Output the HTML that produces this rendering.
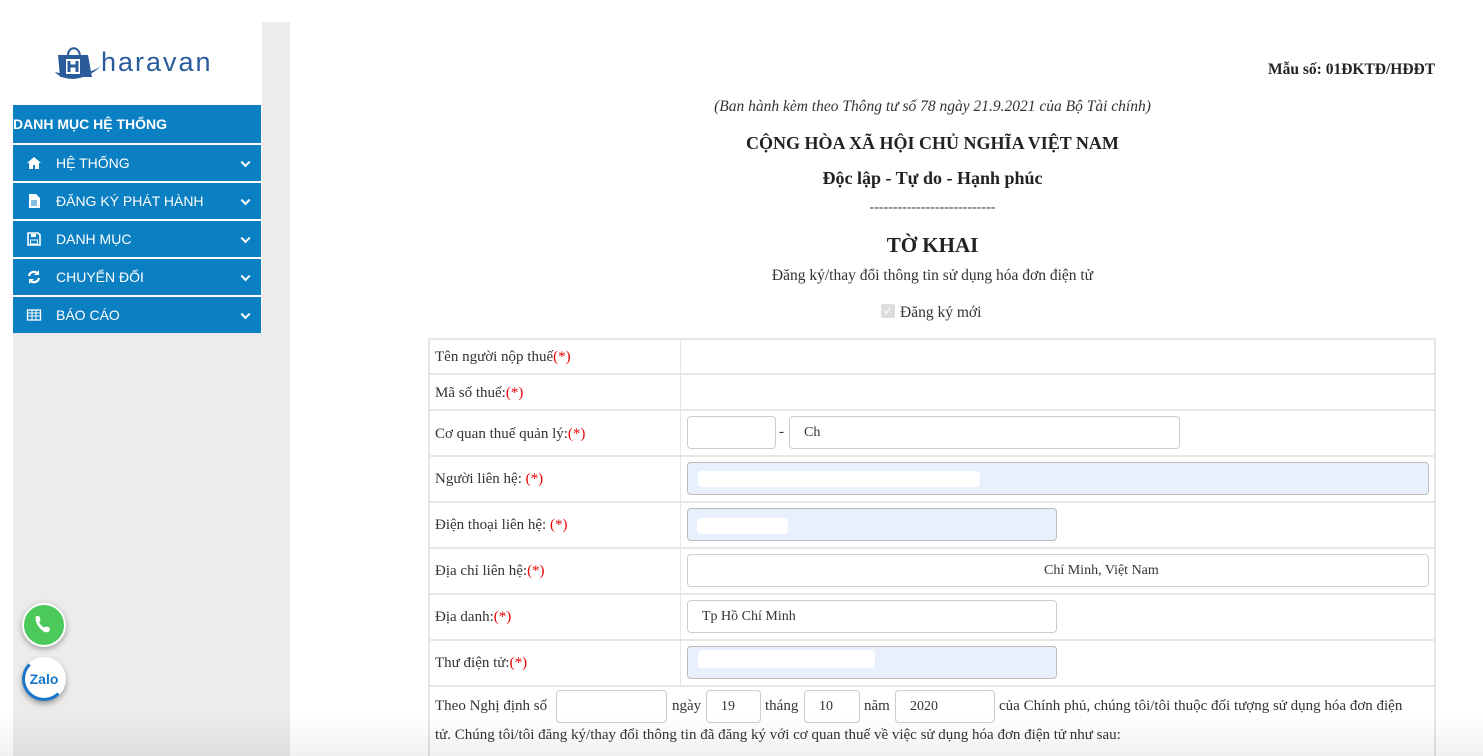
<!DOCTYPE html>
<html><head><meta charset="utf-8"><style>
*{margin:0;padding:0;box-sizing:border-box}
body{width:1483px;height:756px;overflow:hidden;background:#fff;position:relative;font-family:"Liberation Serif",serif;color:#333}
.abs{position:absolute}
.menu{position:absolute;left:13px;width:248px;background:#0a7fc2;color:#fff;font-family:"Liberation Sans",sans-serif;font-size:14px}
.menu .t{position:absolute;left:43px;top:50%;transform:translateY(-50%)}
.menu .ic{position:absolute;left:13px;top:50%;transform:translateY(-50%);width:16px;height:16px}
.menu .ch{position:absolute;right:12px;top:50%;transform:translateY(-60%) rotate(45deg);width:7px;height:7px;border-right:2px solid #fff;border-bottom:2px solid #fff}
.hl{position:absolute;left:428px;width:1008px;height:2px;background:#e6e6e6}
.lbl{position:absolute;left:435px;font-size:15px;color:#333}
.r{color:#e00}
.in{position:absolute;border:1px solid #ccc;border-radius:4px;background:#fff;font-size:14px;padding-left:14px;line-height:31px;height:33px}
.bl{background:#e8f0fe;border-color:#bbb}
.mask{position:absolute;background:#fff;border-radius:4px}
</style></head><body>
<div class="abs" style="left:262px;top:22px;width:28px;height:734px;background:#ececec"></div>
<div class="abs" style="left:13px;top:333px;width:277px;height:423px;background:#ececec"></div>
<svg class="abs" style="left:54px;top:42px" width="50" height="42" viewBox="0 0 50 42">
<path d="M4 13h30l4 22H6z" fill="#2a5c9c"/>
<path d="M14 13c0-8 10-10 12 0" fill="none" stroke="#2a5c9c" stroke-width="2"/>
<rect x="12" y="17" width="14" height="15" fill="#fff"/>
<path d="M15 19v11M23 19v11M15 24h8" stroke="#2a5c9c" stroke-width="3"/>
<path d="M1 30c8 10 30 10 46-6c-14 10-32 10-46 6z" fill="#2a5c9c"/>
</svg>
<div class="abs" style="left:101px;top:45px;font-family:'Liberation Sans',sans-serif;font-size:27px;color:#2a5c9c;letter-spacing:2px;line-height:34px">haravan</div>
<div class="menu" style="top:105px;height:38px"><span style="position:absolute;left:0;top:50%;transform:translateY(-50%);font-weight:bold">DANH MỤC HỆ THỐNG</span></div>
<div class="menu" style="top:145px;height:36px"><svg class="ic" viewBox="0 0 16 16"><path d="M8 2L1 8h2v6h4v-4h2v4h4V8h2z" fill="#fff"/></svg><span class="t">HỆ THỐNG</span><i class="ch"></i></div>
<div class="menu" style="top:183px;height:36px"><svg class="ic" viewBox="0 0 16 16"><path d="M3 1h7l4 4v10H3z" fill="#fff"/><path d="M5 8h6M5 10h6M5 12h6" stroke="#0a7fc2"/></svg><span class="t">ĐĂNG KÝ PHÁT HÀNH</span><i class="ch"></i></div>
<div class="menu" style="top:221px;height:36px"><svg class="ic" viewBox="0 0 16 16"><path d="M2 2h10l2 2v10H2z" fill="none" stroke="#fff" stroke-width="1.6"/><rect x="5" y="3" width="5" height="3" fill="#fff"/><rect x="4.5" y="9" width="7" height="4" fill="none" stroke="#fff"/></svg><span class="t">DANH MỤC</span><i class="ch"></i></div>
<div class="menu" style="top:259px;height:36px"><svg class="ic" viewBox="0 0 16 16"><path d="M3 7a5 5 0 0 1 9-2M13 9a5 5 0 0 1-9 2" fill="none" stroke="#fff" stroke-width="2.2"/><path d="M13 1v5H8zM3 15v-5h5z" fill="#fff"/></svg><span class="t">CHUYỂN ĐỔI</span><i class="ch"></i></div>
<div class="menu" style="top:297px;height:36px"><svg class="ic" viewBox="0 0 16 16"><rect x="1.5" y="3" width="13" height="10" fill="none" stroke="#fff" stroke-width="1.3"/><path d="M1.5 6h13M1.5 9h13M6 3v10M10 3v10" stroke="#fff"/></svg><span class="t">BÁO CÁO</span><i class="ch"></i></div>
<div class="abs" style="left:22px;top:603px;width:44px;height:44px;border-radius:50%;background:#4cc95b;border:2px solid #fff;box-shadow:0 2px 6px rgba(0,0,0,.35)"></div>
<svg class="abs" style="left:30px;top:611px" width="28" height="28" viewBox="0 0 28 28"><path d="M8 5c2 0 3 4 2 5s-1 2 1 4 3 3 4 2 5 0 5 2-2 4-5 3S7 15 6 10s0-5 2-5z" fill="#fff"/></svg>
<div class="abs" style="left:22px;top:657px;width:44px;height:44px;border-radius:50%;background:#fff;border:3px solid #1976c8;border-top-color:#fff;border-right-color:#fff;box-shadow:0 3px 6px rgba(0,0,0,.35);font-family:'Liberation Sans',sans-serif;font-weight:bold;font-size:14px;color:#1976c8;text-align:center;line-height:38px">Zalo</div>
<div class="abs" style="left:1268px;top:61px;font-size:15.5px;font-weight:bold;color:#222">Mẫu số: 01ĐKTĐ/HĐĐT</div>
<div class="abs" style="left:430px;width:1005px;top:98px;text-align:center;font-size:15.5px;font-style:italic">(Ban hành kèm theo Thông tư số 78 ngày 21.9.2021 của Bộ Tài chính)</div>
<div class="abs" style="left:430px;width:1005px;top:133px;text-align:center;font-size:18px;font-weight:bold;color:#222">CỘNG HÒA XÃ HỘI CHỦ NGHĨA VIỆT NAM</div>
<div class="abs" style="left:430px;width:1005px;top:168px;text-align:center;font-size:18px;font-weight:bold;color:#222">Độc lập - Tự do - Hạnh phúc</div>
<div class="abs" style="left:430px;width:1005px;top:200px;text-align:center;font-size:14px">---------------------------</div>
<div class="abs" style="left:430px;width:1005px;top:233px;text-align:center;font-size:21px;font-weight:bold;color:#222">TỜ KHAI</div>
<div class="abs" style="left:430px;width:1005px;top:267px;text-align:center;font-size:15.5px">Đăng ký/thay đổi thông tin sử dụng hóa đơn điện tử</div>
<div class="abs" style="left:881px;top:304px;width:14px;height:14px;background:#ddd;border-radius:2px;color:#fff;font-size:12px;line-height:14px;text-align:center">✓</div>
<div class="abs" style="left:900px;top:304px;font-size:15.5px">Đăng ký mới</div>
<div class="abs" style="left:428px;top:338px;width:2px;height:418px;background:#e6e6e6"></div>
<div class="abs" style="left:1434px;top:338px;width:2px;height:418px;background:#e6e6e6"></div>
<div class="abs" style="left:680px;top:338px;width:1px;height:347px;background:#e6e6e6"></div>
<div class="hl" style="top:338px"></div><div class="hl" style="top:373px"></div><div class="hl" style="top:409px"></div><div class="hl" style="top:455px"></div><div class="hl" style="top:501px"></div><div class="hl" style="top:547px"></div><div class="hl" style="top:593px"></div><div class="hl" style="top:639px"></div><div class="hl" style="top:685px"></div>
<div class="lbl" style="top:349px">Tên người nộp thuế<span class="r">(*)</span></div>
<div class="lbl" style="top:385px">Mã số thuế:<span class="r">(*)</span></div>
<div class="lbl" style="top:426px">Cơ quan thuế quản lý:<span class="r">(*)</span></div>
<div class="lbl" style="top:471px">Người liên hệ: <span class="r">(*)</span></div>
<div class="lbl" style="top:517px">Điện thoại liên hệ: <span class="r">(*)</span></div>
<div class="lbl" style="top:563px">Địa chỉ liên hệ:<span class="r">(*)</span></div>
<div class="lbl" style="top:609px">Địa danh:<span class="r">(*)</span></div>
<div class="lbl" style="top:655px">Thư điện tử:<span class="r">(*)</span></div>
<div class="in" style="left:687px;top:416px;width:89px"></div>
<div class="abs" style="left:779px;top:424px;font-size:15px">-</div>
<div class="in" style="left:789px;top:416px;width:391px">Ch</div>
<div class="in bl" style="left:687px;top:462px;width:742px"></div>
<div class="mask" style="left:698px;top:471px;width:282px;height:16px"></div>
<div class="in bl" style="left:687px;top:508px;width:370px"></div>
<div class="mask" style="left:697px;top:518px;width:91px;height:16px"></div>
<div class="in" style="left:687px;top:554px;width:742px"><span style="position:absolute;left:356px">Chí Minh, Việt Nam</span></div>
<div class="in" style="left:687px;top:600px;width:370px">Tp Hồ Chí Minh</div>
<div class="in bl" style="left:687px;top:646px;width:370px"></div>
<div class="mask" style="left:698px;top:650px;width:177px;height:18px"></div>
<div class="abs" style="left:435px;top:698px;font-size:15px">Theo Nghị định số</div>
<div class="in" style="left:556px;top:690px;width:111px"></div>
<div class="abs" style="left:672px;top:698px;font-size:15px">ngày</div>
<div class="in" style="left:706px;top:690px;width:55px">19</div>
<div class="abs" style="left:765px;top:698px;font-size:15px">tháng</div>
<div class="in" style="left:804px;top:690px;width:56px">10</div>
<div class="abs" style="left:864px;top:698px;font-size:15px">năm</div>
<div class="in" style="left:895px;top:690px;width:100px">2020</div>
<div class="abs" style="left:999px;top:698px;font-size:15px">của Chính phủ, chúng tôi/tôi thuộc đối tượng sử dụng hóa đơn điện</div>
<div class="abs" style="left:435px;top:727px;font-size:15px">tử. Chúng tôi/tôi đăng ký/thay đổi thông tin đã đăng ký với cơ quan thuế về việc sử dụng hóa đơn điện tử như sau:</div>
<div class="abs" style="left:0;top:716px;width:1483px;height:40px;background:linear-gradient(rgba(0,0,0,0),rgba(0,0,0,.06))"></div>
</body></html>
